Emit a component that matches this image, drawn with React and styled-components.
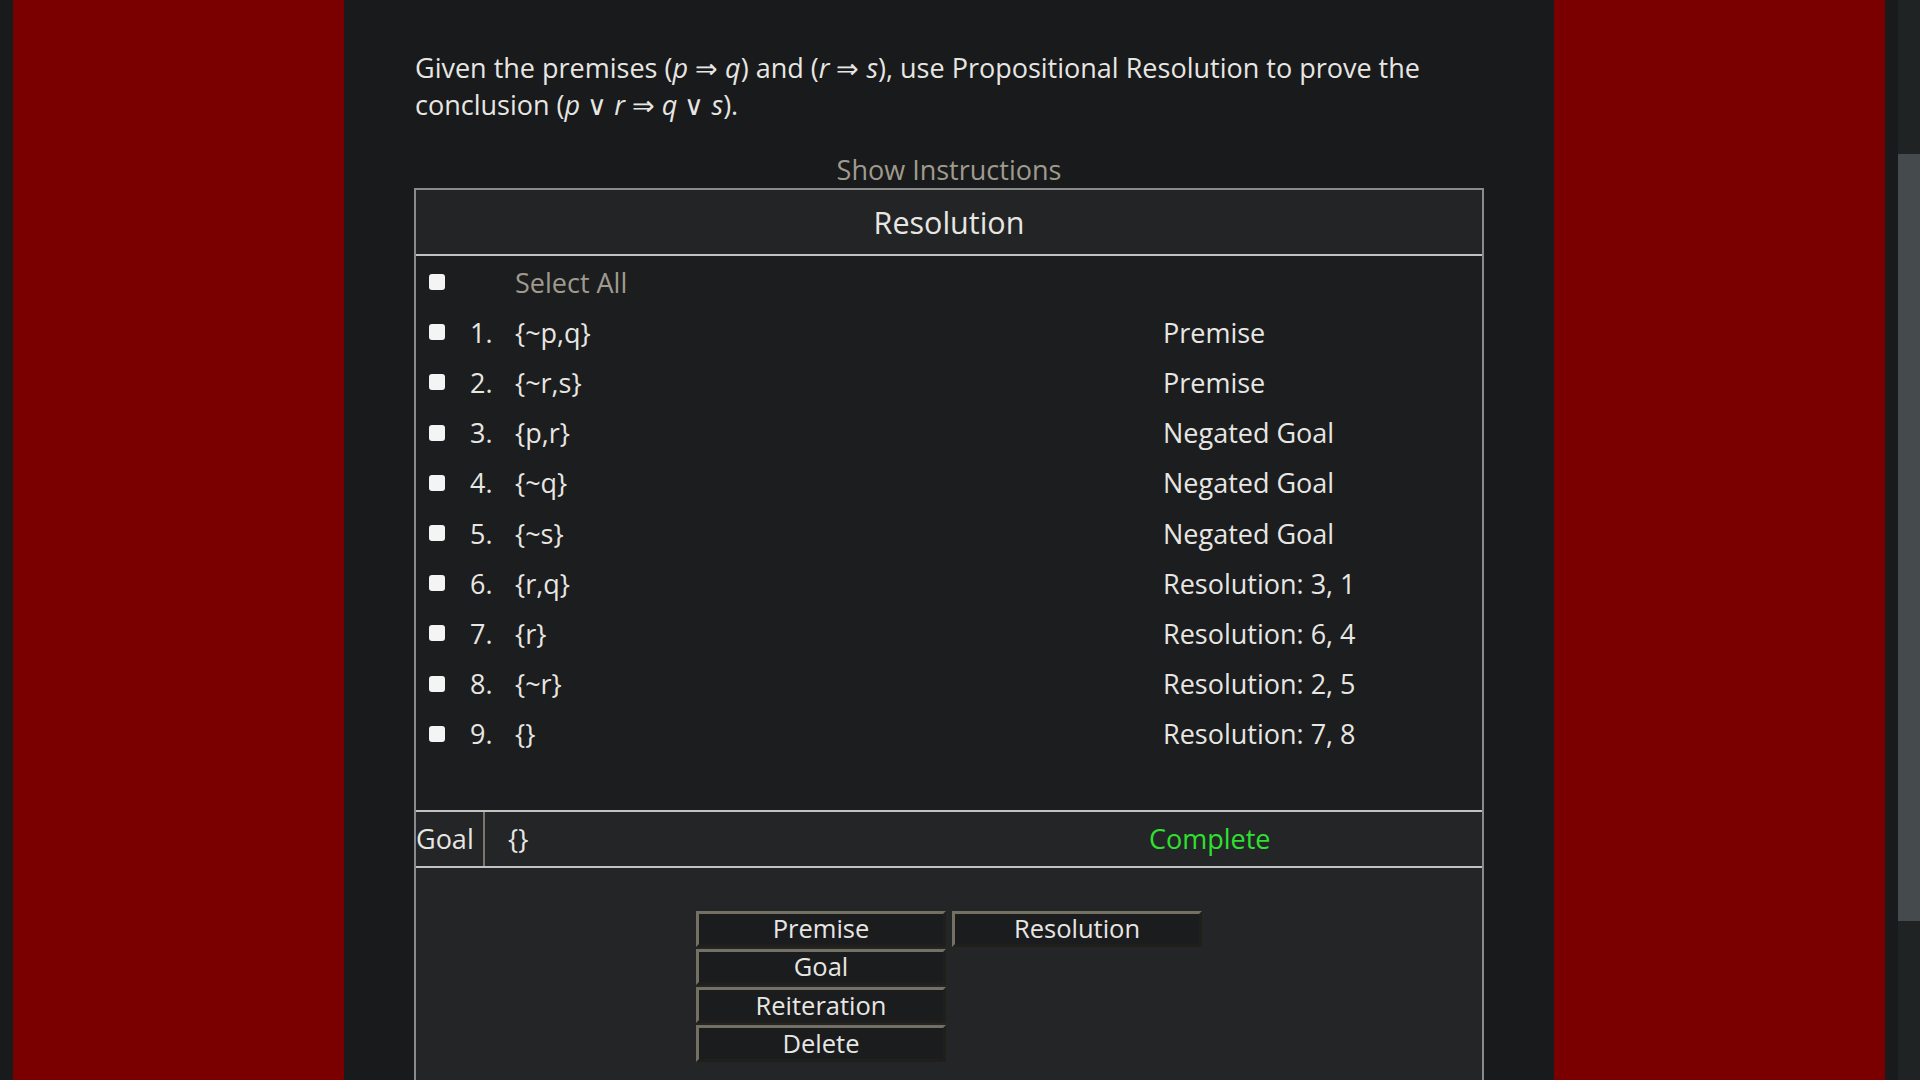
import React from "react";
import styled, { createGlobalStyle } from "styled-components";

const GlobalStyle = createGlobalStyle`
  html, body {
    margin: 0;
    padding: 0;
    background: #181a1b;
    overflow: hidden;
  }
  body {
    font-family: "Open Sans", "Noto Sans", sans-serif;
    color: #e8e6e3;
  }
`;

const Shell = styled.div`
  display: flex;
  height: 100vh;
  overflow: hidden;
`;

const Gutter = styled.div`
  width: 13px;
  flex: none;
  background: #181a1b;
`;

const Side = styled.div`
  width: 331px;
  flex: none;
  background: #7a0000;
`;

const Main = styled.main`
  width: 1210px;
  flex: none;
  box-sizing: border-box;
  padding: 49px 70px 0 70px;
  background: #181a1b;
`;

const Scrollbar = styled.div`
  width: 22px;
  flex: none;
  background: #202324;
  padding-top: 154px;
  box-sizing: border-box;
`;

const Thumb = styled.div`
  height: 767px;
  background: #454a4d;
`;

const Prompt = styled.p`
  margin: 0;
  font-size: 27px;
  line-height: 37px;
  padding-left: 1px;
  color: #e8e6e3;

  i {
    font-style: italic;
  }
`;

const ShowInstructions = styled.div`
  margin-top: 28px;
  text-align: center;
  font-size: 27px;
  line-height: 37px;
  color: #a09a8e;
`;

const Table = styled.section`
  border: 2px solid #8a8a8a;
  border-bottom: none;
`;

const Header = styled.div`
  height: 64px;
  display: flex;
  align-items: center;
  justify-content: center;
  background: #222426;
  border-bottom: 2px solid #c2c2c2;
  font-size: 30.5px;
`;

const List = styled.div`
  background: #1b1d1e;
  padding: 1px 0 51px;
`;

const Row = styled.div`
  display: grid;
  grid-template-columns: 54px 45px 648px 1fr;
  align-items: center;
  height: 50.2px;
  font-size: 27px;
  color: ${(p) => (p.$muted ? "#a09a8e" : "#e8e6e3")};
`;

const Check = styled.span`
  display: block;
  width: 16px;
  height: 16px;
  margin-left: 13px;
  border-radius: 3px;
  background: #f4f4f4;
`;

const GoalRow = styled.div`
  display: flex;
  align-items: center;
  height: 54px;
  background: #232527;
  border-top: 2px solid #c2c2c2;
  border-bottom: 2px solid #c2c2c2;
  font-size: 27px;
`;

const GoalLabel = styled.div`
  width: 69px;
  height: 100%;
  display: flex;
  align-items: center;
  border-right: 2px solid #7d776b;
  box-sizing: border-box;
`;

const GoalFormula = styled.div`
  width: 664px;
  padding-left: 23px;
  box-sizing: border-box;
`;

const Status = styled.div`
  color: #2fe02f;
`;

const Controls = styled.div`
  background: #232527;
  padding: 43px 0 60px;
  display: flex;
  justify-content: center;
  align-items: flex-start;
  gap: 6px;
`;

const ButtonColumn = styled.div`
  display: flex;
  flex-direction: column;
  gap: 2px;
`;

const RuleButton = styled.button`
  width: 250px;
  height: 36.2px;
  box-sizing: border-box;
  background: #1a1c1d;
  color: #e8e6e3;
  border: 3px outset #757064;
  font-family: "Open Sans", "Noto Sans", sans-serif;
  font-size: 25.5px;
  line-height: 1;
  padding: 0;
  display: flex;
  align-items: center;
  justify-content: center;
  cursor: pointer;
`;

const steps = [
  ["{~p,q}", "Premise"],
  ["{~r,s}", "Premise"],
  ["{p,r}", "Negated Goal"],
  ["{~q}", "Negated Goal"],
  ["{~s}", "Negated Goal"],
  ["{r,q}", "Resolution: 3, 1"],
  ["{r}", "Resolution: 6, 4"],
  ["{~r}", "Resolution: 2, 5"],
  ["{}", "Resolution: 7, 8"],
];

export default function App() {
  return (
    <>
      <GlobalStyle />
      <Shell>
        <Gutter />
        <Side />
        <Main>
          <Prompt>
            Given the premises (<i>p</i> ⇒ <i>q</i>) and (<i>r</i> ⇒ <i>s</i>), use
            Propositional Resolution to prove the conclusion (<i>p</i> ∨ <i>r</i> ⇒{" "}
            <i>q</i> ∨ <i>s</i>).
          </Prompt>
          <ShowInstructions>Show Instructions</ShowInstructions>
          <Table>
            <Header>Resolution</Header>
            <List>
              <Row $muted>
                <Check />
                <span />
                <span>Select All</span>
                <span />
              </Row>
              {steps.map(([formula, reason], i) => (
                <Row key={i}>
                  <Check />
                  <span>{i + 1}.</span>
                  <span>{formula}</span>
                  <span>{reason}</span>
                </Row>
              ))}
            </List>
            <GoalRow>
              <GoalLabel>Goal</GoalLabel>
              <GoalFormula>{"{}"}</GoalFormula>
              <Status>Complete</Status>
            </GoalRow>
            <Controls>
              <ButtonColumn>
                <RuleButton>Premise</RuleButton>
                <RuleButton>Goal</RuleButton>
                <RuleButton>Reiteration</RuleButton>
                <RuleButton>Delete</RuleButton>
              </ButtonColumn>
              <ButtonColumn>
                <RuleButton>Resolution</RuleButton>
              </ButtonColumn>
            </Controls>
          </Table>
        </Main>
        <Side />
        <Gutter />
        <Scrollbar>
          <Thumb />
        </Scrollbar>
      </Shell>
    </>
  );
}
